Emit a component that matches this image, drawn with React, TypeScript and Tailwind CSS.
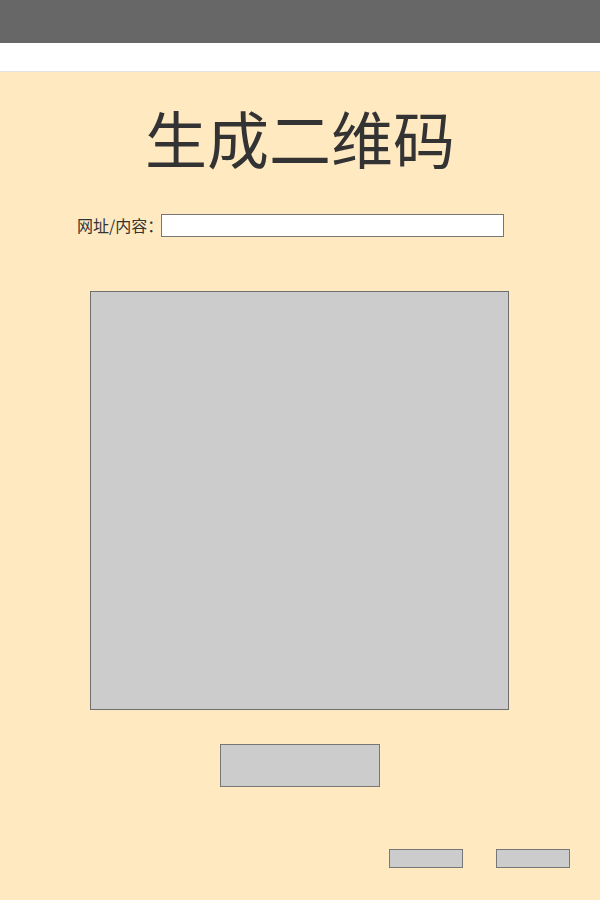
import { useState } from "react";

export default function App() {
  const [url, setUrl] = useState("");

  return (
    <div className="min-h-[900px] bg-[#ffe9c1] font-['Noto_Sans_CJK_SC','Noto_Sans',sans-serif] text-[#333]">
      {/* top bar */}
      <header className="h-[43px] bg-[#676767]"></header>
      <div className="h-[29px] bg-white border-b border-[#e2e2e2]"></div>

      <main className="flex flex-col items-center">
        <h1 className="mt-[25px] text-[62px] leading-[80px] font-normal">生成二维码</h1>

        <div className="mt-[37px] flex items-center w-full pl-[77px]">
          <label className="text-[16px] leading-[23px]">网址/内容：</label>
          <input
            value={url}
            onChange={(e) => setUrl(e.target.value)}
            className="-ml-[2px] w-[343px] h-[23px] bg-white border border-[#767676] px-1 text-sm outline-none"
          />
        </div>

        {/* qr preview */}
        <div className="mt-[54px] self-start ml-[90px] w-[419px] h-[419px] bg-[#cccccc] border border-[#6e6e6e]"></div>

        <button className="mt-[34px] w-[160px] h-[43px] bg-[#cccccc] border border-[#777]"></button>

        <div className="mt-[62px] w-full flex justify-end gap-[33px] pr-[30px]">
          <button className="w-[74px] h-[19px] bg-[#cccccc] border border-[#777]"></button>
          <button className="w-[74px] h-[19px] bg-[#cccccc] border border-[#777]"></button>
        </div>
      </main>
    </div>
  );
}
